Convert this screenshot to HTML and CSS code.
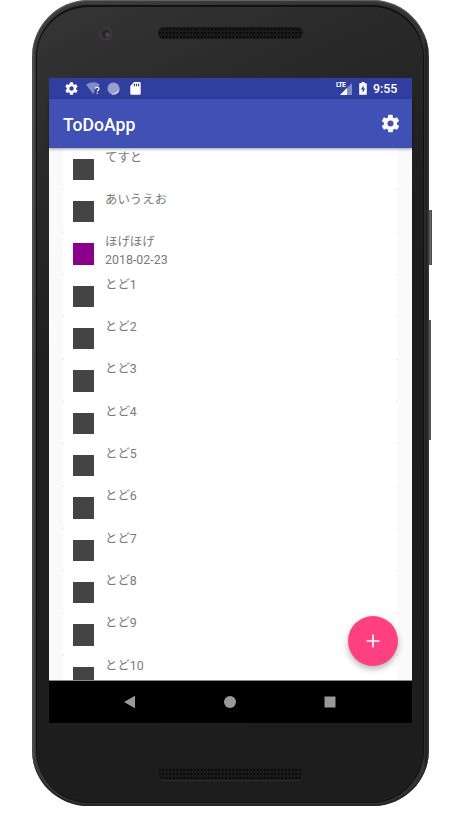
FILE: index.html
```html
<!DOCTYPE html>
<html lang="ja">
<head>
<meta charset="utf-8">
<title>ToDoApp</title>
<link rel="stylesheet" href="styles.css">
</head>
<body>
<div class="phone">
  <i class="side power"></i><i class="side volume"></i>
  <div class="face">
    <div class="top"><i class="camera"></i><i class="speaker"></i></div>
    <div class="screen">
      <header class="status">
        <svg class="s-gear" viewBox="0 0 24 24"><path d="M19.4 13a7.8 7.8 0 0 0 0-2l2.1-1.7a.5.5 0 0 0 .1-.6l-2-3.5a.5.5 0 0 0-.6-.2l-2.5 1a7 7 0 0 0-1.7-1l-.4-2.6a.5.5 0 0 0-.5-.4h-4a.5.5 0 0 0-.5.4L9 5a7 7 0 0 0-1.7 1L4.9 5a.5.5 0 0 0-.6.2l-2 3.5a.5.5 0 0 0 .1.6L4.5 11a7.8 7.8 0 0 0 0 2l-2.1 1.7a.5.5 0 0 0-.1.6l2 3.5a.5.5 0 0 0 .6.2l2.500-1a7 7 0 0 0 1.700 1l.4 2.600a.5.5 0 0 0 .5.4h4a.5.5 0 0 0 .5-.4l.4-2.600a7 7 0 0 0 1.700-1l2.500 1a.5.5 0 0 0 .6-.2l2-3.500a.5.5 0 0 0-.1-.6zM12 15.500a3.500 3.500 0 1 1 0-7 3.500 3.500 0 0 1 0 7z"/></svg>
        <svg class="s-wifi" viewBox="0 0 15 13"><path opacity=".4" d="M0 2.500Q7 -2 14 2.500L12.500 4.500Q8.500 4 8.500 8.500V10L7 12z"/><path fill="none" stroke="#fff" stroke-width="1.200" d="M9.400 6.700q0-1.600 1.800-1.600t1.800 1.500c0 1.400-1.700 1.400-1.700 3M11.300 10.700v1.200"/></svg>
        <svg class="s-circle" viewBox="0 0 13 13"><circle cx="6.500" cy="6.500" r="6" opacity=".5"/><path opacity=".85" d="M12.500 6.500A6 6 0 0 1 4 12Q8 12 10 10T12.500 6.500"/></svg>
        <svg class="s-sd" viewBox="0 0 11 13"><path fill-rule="evenodd" d="M4 0h5.500q1.200 0 1.200 1.200v10.300q0 1.200-1.200 1.200h-8Q.3 12.700.3 11.500V4zM3.800 1.800v2.400H5V1.800zm2.100 0v2.400h1.200V1.800zm2.100 0v2.400h1.200V1.800z"/></svg>
        <span class="grow"></span>
        <span class="signal"><b>LTE</b><svg viewBox="0 0 12 12"><path opacity=".4" d="M12 0v12H0z"/><path d="M7 5v7H0z"/></svg></span>
        <svg class="s-battery" viewBox="0 0 8 13"><path fill-rule="evenodd" d="M2.500 0h3v1.200h1.700q.6 0 .6.600v10.400q0 .6-.6.600H.8q-.6 0-.6-.6V1.800q0-.6.6-.6h1.700zM4.600 3.300 1.900 7.600h1.700v3.200L6.200 6.500H4.600z"/></svg>
        <time>9:55</time>
      </header>
      <div class="toolbar">
        <h1>ToDoApp</h1>
        <svg viewBox="0 0 24 24"><path d="M19.400 13a7.800 7.800 0 0 0 0-2l2.100-1.700a.5.5 0 0 0 .1-.6l-2-3.500a.5.5 0 0 0-.6-.2l-2.500 1a7 7 0 0 0-1.700-1l-.4-2.600a.5.5 0 0 0-.5-.4h-4a.5.5 0 0 0-.5.4L9 5a7 7 0 0 0-1.700 1L4.900 5a.5.5 0 0 0-.6.2l-2 3.500a.5.5 0 0 0 .1.6L4.500 11a7.800 7.800 0 0 0 0 2l-2.100 1.700a.5.5 0 0 0-.1.6l2 3.500a.5.5 0 0 0 .6.2l2.500-1a7 7 0 0 0 1.700 1l.4 2.600a.5.5 0 0 0 .5.4h4a.5.5 0 0 0 .5-.4l.4-2.600a7 7 0 0 0 1.700-1l2.500 1a.5.5 0 0 0 .6-.2l2-3.500a.5.5 0 0 0-.1-.6zM12 15.500a3.500 3.500 0 1 1 0-7 3.500 3.500 0 0 1 0 7z"/></svg>
      </div>
      <main>
        <ul>
          <li><i></i><p>てすと</p></li>
          <li><i></i><p>あいうえお</p></li>
          <li><i class="purple"></i><p>ほげほげ<br>2018-02-23</p></li>
          <li><i></i><p>とど1</p></li>
          <li><i></i><p>とど2</p></li>
          <li><i></i><p>とど3</p></li>
          <li><i></i><p>とど4</p></li>
          <li><i></i><p>とど5</p></li>
          <li><i></i><p>とど6</p></li>
          <li><i></i><p>とど7</p></li>
          <li><i></i><p>とど8</p></li>
          <li><i></i><p>とど9</p></li>
          <li><i></i><p>とど10</p></li>
        </ul>
        <button class="fab" aria-label="Add"><svg viewBox="0 0 14 14"><path d="M7 .5v13M.5 7h13"/></svg></button>
      </main>
      <nav>
        <svg viewBox="0 0 14 14"><path d="M1 7 12 .7v12.600z"/></svg>
        <svg viewBox="0 0 14 14"><circle cx="7" cy="7" r="6"/></svg>
        <svg viewBox="0 0 14 14"><path d="M1.500 1.500h11v11h-11z"/></svg>
      </nav>
    </div>
    <div class="bottom"><i class="speaker"></i></div>
  </div>
</div>
</body>
</html>
```
FILE: styles.css
```css
* { box-sizing: border-box; }
body { margin: 0; background: #fff; font-family: Roboto, "Noto Sans CJK JP", sans-serif; overflow: hidden; }
svg { display: block; fill: #fff; flex: none; }
.phone {
  position: relative;
  width: 397px; height: 806px; margin-left: 32px;
  padding: 5px 5px 3px;
  border-radius: 57px 57px 56px 56px;
  background: linear-gradient(90deg, #555 0, #3d3d3d 3px, #343434 392px, #1f1d1e 394px, #3b393a 397px);
  box-shadow: inset 0 1px 1px #666, inset 0 -2px 1px #242424;
}
.side { position: absolute; left: 397px; background: linear-gradient(90deg, #4c4c4c, #6b6b6b 60%, #333); }
.power { top: 210px; width: 3px; height: 55px; }
.volume { top: 320px; width: 2px; height: 120px; }
.face {
  height: 798px; padding-left: 12px;
  border: 1px solid #111; border-width: 2px 1px 1px 0;
  border-radius: 52px 52px 53px 53px;
  background: linear-gradient(155deg, #353535 0, #2b2b2b 15%, #1e1e1e 38%, #1d1d1d 100%);
  box-shadow: -1px 0 1px #0b0b0b, 0 1px 1px #383838;
}
.top { height: 71px; display: flex; align-items: flex-start; padding: 20px 0 0 50px; }
.camera { width: 14px; height: 14px; border-radius: 50%; border: 3px solid #393839; background: radial-gradient(circle at 70% 60%, #65505d, #25232b 45%); }
.speaker {
  width: 145px; height: 12px; border-radius: 6px; background-color: #1a1a1a;
  background-image: radial-gradient(circle, #080808 1px, transparent 1.3px);
  background-size: 3.5px 4px; box-shadow: 0 1px 0 #2d2d2d;
}
.top .speaker { margin-left: 45px; }
.bottom { padding: 45px 0 0 109px; display: flex; }
.screen { width: 363px; height: 645px; display: flex; flex-direction: column; background: #fafafa; }
.status { height: 21px; display: flex; align-items: center; background: #303f9f; padding: 0 14px 0 15px; }
.s-gear { width: 15px; height: 15px; }
.s-wifi { width: 15px; height: 13px; margin-left: 7px; }
.s-circle { width: 13px; height: 13px; margin-left: 6px; }
.s-sd { width: 11px; height: 13px; margin-left: 10px; }
.grow { flex: 1; }
.signal { display: flex; height: 13px; align-items: flex-start; }
.signal b { width: 4px; margin-left: -1px; color: #fff; font: 700 7px/7px Roboto, sans-serif; letter-spacing: -.7px; white-space: nowrap; }
.signal svg { width: 12px; height: 12px; margin-top: 1px; }
.s-battery { width: 8px; height: 13px; margin: 0 6px 0 7px; }
time { width: 25px; color: #fff; font-size: 12.4px; font-weight: 500; line-height: 21px; white-space: nowrap; }
.toolbar {
  height: 49px; flex: none; display: flex; align-items: center; justify-content: space-between;
  padding: 0 11px 0 14px; background: #4050b5; position: relative; z-index: 1; box-shadow: 0 1px 3px rgba(0,0,0,.4);
}
h1 { margin: 2px 0 0; color: #fff; font-size: 17.6px; font-weight: 500; line-height: 24px; }
.toolbar svg { width: 21px; height: 21px; }
main { flex: 1; min-height: 0; overflow: hidden; position: relative; border-bottom: 1px solid #8a8a8a; }
ul { margin: 0 14px; padding: 0; list-style: none; }
li {
  height: 42.34px; padding-left: 10px; display: flex; align-items: flex-start;
  background: radial-gradient(circle at 0 100%, #e4e4e4 1px, transparent 2px), radial-gradient(circle at 100% 100%, #e4e4e4 1px, transparent 2px), #fff;
}
li i { width: 21.4px; height: 21.4px; margin-top: 10.7px; background: #444; }
li .purple { background: #8b008b; }
li p { margin: .8px 0 0 10.7px; color: #7a7a7a; font-size: 12.4px; line-height: 17.5px; }
.fab {
  position: absolute; right: 14px; bottom: 14px; width: 50px; height: 50px; padding: 0; border: 0; border-radius: 50%;
  display: grid; place-items: center; background: #ff4081; box-shadow: 0 3px 6px rgba(0,0,0,.3);
}
.fab svg { width: 14px; height: 14px; stroke: #fff; stroke-width: 1.7; }
nav { height: 42px; flex: none; display: flex; justify-content: space-between; align-items: center; padding: 0 75px 1px 74px; background: #000; }
nav svg { width: 14px; height: 14px; fill: #999; }
```
